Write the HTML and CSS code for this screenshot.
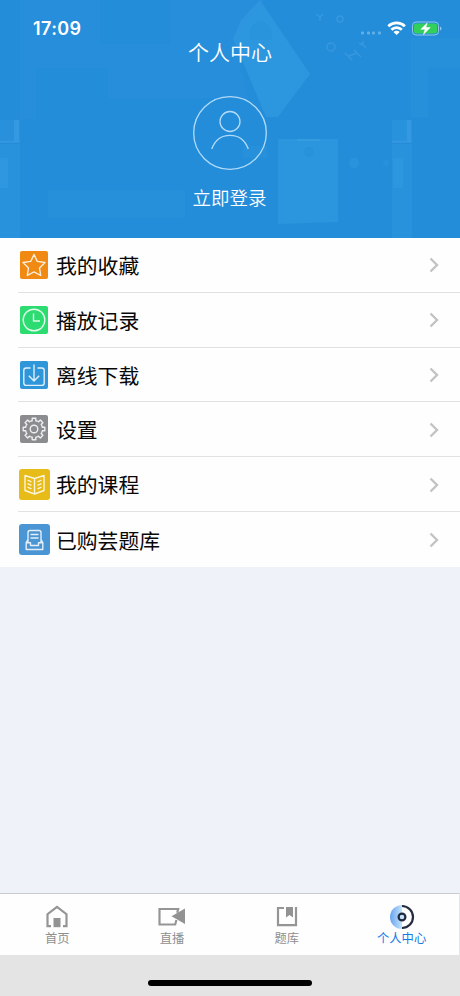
FILE: index.html
```html
<!DOCTYPE html>
<html lang="zh-CN">
<head>
<meta charset="utf-8">
<title>个人中心</title>
<link rel="stylesheet" href="styles.css">
</head>
<body>
<div class="screen">
  <header class="hero">
    <svg class="hero-art" viewBox="0 0 460 238" aria-hidden="true">
      <g fill="#36a0e3">
        <path d="M260 0 310 74 278 117H266L233 39 241 20Z" opacity=".48"/>
        <path d="M278 139H338V222L278 224Z" opacity=".42"/>
        <path d="M20 0H100V44H170V0H265L235 40 248 98H108V68H36V119H20Z" opacity=".12"/>
        <path d="M0 120H20V142H0Z" opacity=".25"/>
        <path d="M0 144H20V238H0Z" opacity=".32"/>
        <path d="M0 158H8V188H0Z" opacity=".4"/>
        <path d="M392 120H412V142H392ZM392 144H412V238H392Z" opacity=".28"/>
        <path d="M393 158H403V188H393Z" opacity=".3"/>
        <path d="M411 38H460V68H428V117H411Z" opacity=".17"/>
        <path d="M243 146H267V158H243ZM48 190H185V218H48Z" opacity=".14"/>
        <circle cx="354" cy="163" r="5" opacity=".35"/>
        <circle cx="386" cy="163" r="3" opacity=".25"/>
      </g>
      <path d="M249 30Q260 13 272 30V40H251Z" fill="#1c87d4" opacity=".18"/>
      <path d="M14 120H19V142H14ZM407 120H411V142H407ZM0 141H20V143H0ZM392 141H412V143H392ZM297 139H320V141H297Z" fill="#66baf0" opacity=".2"/>
      <circle cx="309" cy="152" r="5" fill="#1c84d0" opacity=".2"/>
      <g fill="none" stroke="#65b5ed" stroke-width="1.5" opacity=".28">
        <path d="m316 14 4 3 3-3M320 17v4M345 53l7 7m2-10 7 7m-12-1 8-3M359 43l4 2 0-4M363 45l3 3"/>
        <circle cx="340" cy="19" r="3"/><circle cx="331" cy="47" r="4"/>
      </g>
    </svg>
    <div class="status">
      <span class="time">17:09</span>
      <svg class="status-icons" viewBox="0 0 84 18" aria-hidden="true">
        <g fill="#62b0e6"><rect x="2" y="12.5" width="3" height="3" rx="1"/><rect x="8" y="12.5" width="3" height="3" rx="1"/><rect x="13" y="12.5" width="3" height="3" rx="1"/><rect x="19" y="12.5" width="3" height="3" rx="1"/></g>
        <g transform="translate(.6 .5)"><g fill="none" stroke="#fff" stroke-width="2.7"><path d="M28.7 6.8a12 12 0 0 1 16.6 0"/><path d="M31.8 10.2a7.4 7.4 0 0 1 10.4 0"/></g>
        <path d="M37 15.6 33.9 12.5a4.4 4.4 0 0 1 6.2 0Z" fill="#fff"/></g>
        <g transform="translate(.5 .5)"><rect x="53" y="2.5" width="26" height="13" rx="3.5" fill="none" stroke="#8fc5ec"/>
        <rect x="54.5" y="4" width="23" height="10" rx="2" fill="#32cf5c"/>
        <path d="M80.5 7v4q1.5-.5 1.5-2T80.500 7Z" fill="#8fc5ec"/>
        <path d="m67.700 3.500-6.400 6.300h4.200l-1.500 5.200 6.700-7h-4.300Z" fill="#fff" stroke="#fff" stroke-width=".5"/></g>
      </svg>
    </div>
    <h1 class="title">个人中心</h1>
    <svg class="avatar" viewBox="0 0 74 74" aria-hidden="true">
      <g fill="none" stroke="#b2dbf8" stroke-width="1.3"><circle cx="37" cy="37" r="36.3"/><circle cx="37" cy="25.500" r="10"/><path d="M18.700 53C22 44 29 39.300 37 39.300S52 44 55.300 53"/></g>
    </svg>
    <div class="login">立即登录</div>
  </header>

  <main class="menu">
    <div class="row"><span class="tile"><svg class="icon orange" viewBox="0 0 28 28"><path d="m14 3.500 3.300 6.900 7.700 1.100-5.500 5.400 1.200 7.600-6.700-3.600-6.700 3.600 1.200-7.600L3 11.500l7.700-1.100Z"/></svg></span><span class="label">我的收藏</span><svg class="chevron" viewBox="0 0 10 16"><path d="m1.500 1.500 6.500 6.500-6.500 6.500"/></svg></div>
    <div class="row"><span class="tile"><svg class="icon green" viewBox="0 0 28 28"><circle cx="14" cy="14" r="10.800"/><path d="M13.500 7.500V15H20"/></svg></span><span class="label">播放记录</span><svg class="chevron" viewBox="0 0 10 16"><path d="m1.500 1.500 6.500 6.500-6.500 6.500"/></svg></div>
    <div class="row"><span class="tile"><svg class="icon blue" viewBox="0 0 28 28"><path d="M10.500 7H6.200Q3.800 7 3.800 9.400V22Q3.800 24.400 6.200 24.400H21.800Q24.200 24.400 24.200 22V9.400Q24.200 7 21.800 7H17.500M14 3.500V19.500M8.800 14.800 14 20l5.200-5.200"/></svg></span><span class="label">离线下载</span><svg class="chevron" viewBox="0 0 10 16"><path d="m1.500 1.500 6.500 6.500-6.500 6.500"/></svg></div>
    <div class="row"><span class="tile"><svg class="icon gray" viewBox="0 0 28 28"><defs><path id="tooth" d="M-3.250-7.850Q-2.500-8.200-1.800-8.300V-10.800H1.800V-8.300Q2.500-8.200 3.250-7.850"/></defs><g transform="translate(14 14)"><use href="#tooth"/><use href="#tooth" transform="rotate(45)"/><use href="#tooth" transform="rotate(90)"/><use href="#tooth" transform="rotate(135)"/><use href="#tooth" transform="rotate(180)"/><use href="#tooth" transform="rotate(225)"/><use href="#tooth" transform="rotate(270)"/><use href="#tooth" transform="rotate(315)"/><circle r="3.800"/></g></svg></span><span class="label">设置</span><svg class="chevron" viewBox="0 0 10 16"><path d="m1.500 1.500 6.500 6.500-6.500 6.500"/></svg></div>
    <div class="row"><span class="tile"><svg class="icon large yellow" viewBox="0 0 31 31"><path d="M15.500 9.500 6 6.500V21.500L15.500 25 25 21.500V6.500ZM15.500 9.500V25M8.500 11.200l4 1.600M8.500 14.700l4 1.600M8.500 18.200l4 1.600M22.500 11.200l-4 1.600M22.500 14.700l-4 1.600M22.500 18.200l-4 1.600"/></svg></span><span class="label">我的课程</span><svg class="chevron" viewBox="0 0 10 16"><path d="m1.500 1.500 6.500 6.500-6.500 6.500"/></svg></div>
    <div class="row"><span class="tile"><svg class="icon large steel" viewBox="0 0 31 31"><path d="M9 18V8.500Q9 6.500 11 6.500H20Q22 6.500 22 8.500V18M11.500 10.500h8M11.500 14h8M9 15.500 7.200 18.500V25.500H23.800V18.500L22 15.500M7.200 18.800H11.500V21.500H19.500V18.800H23.800"/></svg></span><span class="label">已购芸题库</span><svg class="chevron" viewBox="0 0 10 16"><path d="m1.500 1.500 6.500 6.500-6.500 6.500"/></svg></div>
  </main>

  <nav class="tabs">
    <div class="tab"><svg class="tab-icon" viewBox="0 0 28 26"><path d="M8 22.200H4.500V10.200L14 2.800l9.500 7.400v12H20" fill="none" stroke="#959595" stroke-width="2.200"/><path d="M10.500 14H17.500V23.200H10.500Z" fill="#929292"/></svg><span>首页</span></div>
    <div class="tab"><svg class="tab-icon" viewBox="0 0 28 26"><path d="M19.200 8.800 20.200 5H1.500V20.500H17.200L18.400 16" fill="none" stroke="#959595" stroke-width="2.200"/><path d="M13.500 12.300 27 4.500V20Z" fill="#929292"/></svg><span>直播</span></div>
    <div class="tab"><svg class="tab-icon" viewBox="0 0 28 26"><path d="M11 4H5V21.200H23V3" fill="none" stroke="#959595" stroke-width="2.200"/><path d="M13 3H20V13.500L16.500 11 13 13.500Z" fill="#929292"/></svg><span>题库</span></div>
    <div class="tab active"><svg class="tab-icon" viewBox="0 0 28 26"><defs><linearGradient id="moon" x1="0" y1="0" x2="1" y2="0"><stop offset="0" stop-color="#67a4ee"/><stop offset="1" stop-color="#c4e3fb"/></linearGradient></defs><path d="M14 1A12 12 0 0 0 14 25Z" fill="url(#moon)"/><path d="M14 2A11 11 0 0 1 14 24" fill="none" stroke="#242c3f" stroke-width="2.200"/><circle cx="14" cy="13" r="3.400" fill="#c4e3fb" stroke="#20283c" stroke-width="2.200"/></svg><span>个人中心</span></div>
  </nav>
  <footer class="home"><div class="indicator"></div></footer>
</div>
</body>
</html>
```
FILE: styles.css
```css
* { box-sizing: border-box; }
body { margin: 0; font-family: "Noto Sans CJK SC", sans-serif; }
.screen { width: 460px; height: 996px; display: flex; flex-direction: column; background: #eff2f8; overflow: hidden; }
.hero { position: relative; height: 238px; flex: none; display: flex; flex-direction: column; align-items: center; background: #248dda; color: #fff; }
.hero-art { position: absolute; inset: 0; width: 460px; height: 238px; }
.status, .title, .avatar, .login { position: relative; }
.status { width: 100%; height: 37px; padding: 19px 17px 0 33px; display: flex; justify-content: space-between; align-items: flex-start; }
.time { font: 600 18px/20px Inter, sans-serif; letter-spacing: 0.4px; }
.status-icons { width: 84px; height: 18px; }
.title { margin: 0; font-size: 21px; font-weight: 350; line-height: 28px; }
.avatar { width: 74px; height: 74px; margin-top: 31px; }
.login { margin-top: 13px; padding-right: 1px; font-size: 18.5px; font-weight: 350; line-height: 28px; }
.menu { height: 329px; flex: none; display: grid; grid-template-rows: repeat(6, 1fr); background: #fefefe; }
.row { margin-left: 18px; padding-right: 21px; display: flex; align-items: center; border-bottom: 1px solid #e1e1e3; }
.row:last-child { border-bottom: 0; }
.tile { width: 32px; display: flex; justify-content: center; }
.icon { width: 28px; height: 28px; border-radius: 2px; fill: none; stroke: rgba(255, 255, 255, .85); stroke-width: 1.4; stroke-linejoin: round; }
.large { width: 31px; height: 31px; border-radius: 3px; }
.orange { background: #f18a12; }
.green { background: #2ddc70; }
.blue { background: #3096da; }
.gray { background: #8b8c8f; }
.yellow { background: #e7bb18; }
.steel { background: #4a95d3; }
.label { flex: 1; margin-left: 6px; font-size: 20.8px; line-height: 30px; color: #080808; }
.chevron { width: 10px; height: 16px; margin-top: 1px; fill: none; stroke: #c3c3c5; stroke-width: 2.4; }
.tabs { height: 62px; margin-top: auto; flex: none; display: grid; grid-template-columns: repeat(4, 1fr); background: #fefefe; border-top: 1px solid #c9cbd2; border-right: 1px solid #e4e5e9; }
.tab { display: flex; flex-direction: column; align-items: center; padding-top: 10px; color: #8f8f8f; font-size: 12.3px; line-height: 17px; }
.tab-icon { width: 28px; height: 26px; }
.active { color: #167be8; }
.home { height: 41px; flex: none; display: flex; justify-content: center; align-items: flex-start; padding-top: 25px; background: #e4e4e4; }
.indicator { width: 164px; height: 6px; border-radius: 3px; background: #000; }
```
